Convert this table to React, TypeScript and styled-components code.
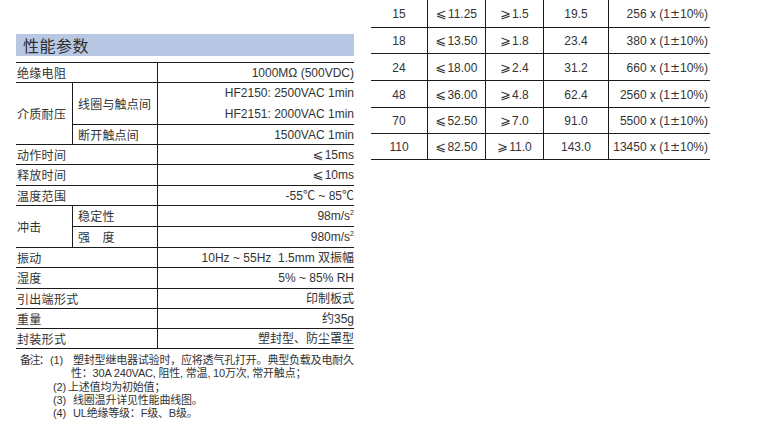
import React from "react";
import styled, { createGlobalStyle, css } from "styled-components";

const GlobalStyle = createGlobalStyle`
  html, body {
    margin: 0;
    padding: 0;
    background: #ffffff;
  }
  body {
    font-family: "Liberation Sans", "Noto Sans CJK SC", sans-serif;
    color: #333333;
  }
`;

const LINE = "#1c1c1c";

const Page = styled.div`
  display: flex;
  align-items: flex-start;
  gap: 17px;
  padding-left: 16px;
  width: 770px;
  height: 434px;
  box-sizing: border-box;
  overflow: hidden;
`;

const LeftPanel = styled.section`
  width: 338px;
  padding-top: 34px;
  display: flex;
  flex-direction: column;
`;

const TitleBar = styled.h2`
  margin: 0 0 6px;
  height: 22px;
  background: #b8c8e4;
  padding-left: 7px;
  font: 400 16px/22px "Noto Sans CJK SC", sans-serif;
  letter-spacing: 0.5px;
  color: #2e2e2e;
`;

const SpecGrid = styled.div`
  display: grid;
  grid-template-columns: 57px 85px 196px;
  grid-template-rows: 20px 42px 20px 20px 21px 20px 21px 21px 20px 21px 20px 20px 20px;
  border-top: 1px solid ${LINE};
`;

type Kind = "label" | "sub" | "value";

const Cell = styled.div<{ $kind: Kind; $span?: number; $rows?: number }>`
  box-sizing: border-box;
  border-bottom: 1px solid ${LINE};
  display: flex;
  flex-direction: column;
  justify-content: center;
  font-size: 12px;
  line-height: 14px;
  white-space: nowrap;
  color: #333333;
  grid-column: span ${(p) => p.$span ?? 1};
  grid-row: span ${(p) => p.$rows ?? 1};
  ${(p) =>
    p.$kind === "label" &&
    css`
      border-right: 1px solid ${LINE};
      align-items: flex-start;
      padding-left: 1px;
      letter-spacing: 0.3px;
      font-family: "Noto Sans CJK SC", sans-serif;
    `}
  ${(p) =>
    p.$kind === "sub" &&
    css`
      border-right: 1px solid ${LINE};
      align-items: flex-start;
      padding-left: 5px;
      letter-spacing: 0.2px;
      font-family: "Noto Sans CJK SC", sans-serif;
    `}
  ${(p) =>
    p.$kind === "value" &&
    css`
      align-items: flex-end;
      padding-right: 0;
    `}
`;

const ValueLine = styled.span`
  line-height: 20.5px;
`;

const Sym = styled.span`
  font-family: "DejaVu Sans", "Noto Sans CJK SC", sans-serif;
  font-size: 13px;
  line-height: 0;
  margin-right: 1px;
`;

const PlusMinus = styled.span`
  font-family: "DejaVu Sans", sans-serif;
  font-size: 12px;
`;

const Cjk = styled.span`
  font-family: "Noto Sans CJK SC", sans-serif;
`;

const Sup = styled.sup`
  font-size: 7px;
  line-height: 0;
  vertical-align: 5px;
`;

const Notes = styled.div`
  margin-top: 5px;
  padding-left: 4px;
  font-size: 11px;
  line-height: 13px;
  letter-spacing: -0.2px;
  color: #333333;
`;

const NoteLine = styled.div<{ $indent: number; $gap?: number }>`
  display: flex;
  padding-left: ${(p) => p.$indent}px;
  margin-top: ${(p) => p.$gap ?? 0}px;
  white-space: nowrap;
`;

const NoteTag = styled.span<{ $w?: number; $tight?: boolean }>`
  flex: none;
  width: ${(p) => (p.$w ? `${p.$w}px` : "auto")};
  letter-spacing: ${(p) => (p.$tight ? "-1.6px" : "inherit")};
  overflow: hidden;
`;

const RightTable = styled.div`
  display: grid;
  grid-template-columns: 57px 58px 58px 65px 101px;
  grid-template-rows: 28px 26px 27px 27px 26px 26px;
  width: 339px;
`;

const TCell = styled.div<{ $last?: boolean }>`
  box-sizing: border-box;
  border-bottom: 1px solid ${LINE};
  border-right: ${(p) => (p.$last ? "none" : `1px solid ${LINE}`)};
  display: flex;
  align-items: center;
  justify-content: ${(p) => (p.$last ? "flex-end" : "center")};
  padding-right: ${(p) => (p.$last ? "2px" : "0")};
  padding-top: 1px;
  font-size: 12px;
  white-space: nowrap;
  color: #333333;
`;

const le = "\u2A7D";
const ge = "\u2A7E";

const coilRows = [
  ["15", "11.25", "1.5", "19.5", "256"],
  ["18", "13.50", "1.8", "23.4", "380"],
  ["24", "18.00", "2.4", "31.2", "660"],
  ["48", "36.00", "4.8", "62.4", "2560"],
  ["70", "52.50", "7.0", "91.0", "5500"],
  ["110", "82.50", "11.0", "143.0", "13450"],
];

export default function App() {
  return (
    <>
      <GlobalStyle />
      <Page>
        <LeftPanel>
          <TitleBar>性能参数</TitleBar>
          <SpecGrid>
            <Cell $kind="label" $span={2}>绝缘电阻</Cell>
            <Cell $kind="value">1000MΩ (500VDC)</Cell>

            <Cell $kind="label" $rows={2}>介质耐压</Cell>
            <Cell $kind="sub">线圈与触点间</Cell>
            <Cell $kind="value">
              <ValueLine>HF2150: 2500VAC 1min</ValueLine>
              <ValueLine>HF2151: 2000VAC 1min</ValueLine>
            </Cell>
            <Cell $kind="sub">断开触点间</Cell>
            <Cell $kind="value">1500VAC 1min</Cell>

            <Cell $kind="label" $span={2}>动作时间</Cell>
            <Cell $kind="value">
              <span><Sym>{le}</Sym>15ms</span>
            </Cell>
            <Cell $kind="label" $span={2}>释放时间</Cell>
            <Cell $kind="value">
              <span><Sym>{le}</Sym>10ms</span>
            </Cell>
            <Cell $kind="label" $span={2}>温度范围</Cell>
            <Cell $kind="value">
              <span>-55<Cjk>℃</Cjk> ~ 85<Cjk>℃</Cjk></span>
            </Cell>

            <Cell $kind="label" $rows={2}>冲击</Cell>
            <Cell $kind="sub">稳定性</Cell>
            <Cell $kind="value">
              <span>98m/s<Sup>2</Sup></span>
            </Cell>
            <Cell $kind="sub">强　度</Cell>
            <Cell $kind="value">
              <span>980m/s<Sup>2</Sup></span>
            </Cell>

            <Cell $kind="label" $span={2}>振动</Cell>
            <Cell $kind="value">
              <span>10Hz ~ 55Hz&nbsp; 1.5mm <Cjk>双振幅</Cjk></span>
            </Cell>
            <Cell $kind="label" $span={2}>湿度</Cell>
            <Cell $kind="value">5% ~ 85% RH</Cell>
            <Cell $kind="label" $span={2}>引出端形式</Cell>
            <Cell $kind="value">印制板式</Cell>
            <Cell $kind="label" $span={2}>重量</Cell>
            <Cell $kind="value">约35g</Cell>
            <Cell $kind="label" $span={2}>封装形式</Cell>
            <Cell $kind="value">塑封型、防尘罩型</Cell>
          </SpecGrid>

          <Notes>
            <NoteLine $indent={0}>
              <NoteTag $w={30} $tight>备注：</NoteTag>
              <NoteTag $w={23}>(1)</NoteTag>
              <span>塑封型继电器试验时，应将透气孔打开。典型负载及电耐久</span>
            </NoteLine>
            <NoteLine $indent={51}>
              <span>性：30A 240VAC, 阻性, 常温, 10万次, 常开触点；</span>
            </NoteLine>
            <NoteLine $indent={33} $gap={1}>
              <NoteTag $w={15}>(2)</NoteTag>
              <span>上述值均为初始值；</span>
            </NoteLine>
            <NoteLine $indent={33}>
              <NoteTag $w={20}>(3)</NoteTag>
              <span>线圈温升详见性能曲线图。</span>
            </NoteLine>
            <NoteLine $indent={33}>
              <NoteTag $w={20}>(4)</NoteTag>
              <span>UL绝缘等级：F级、B级。</span>
            </NoteLine>
          </Notes>
        </LeftPanel>

        <RightTable>
          {coilRows.map(([v, pick, drop, power, res]) => (
            <React.Fragment key={v}>
              <TCell>{v}</TCell>
              <TCell>
                <span><Sym>{le}</Sym>{pick}</span>
              </TCell>
              <TCell>
                <span><Sym>{ge}</Sym>{drop}</span>
              </TCell>
              <TCell>{power}</TCell>
              <TCell $last>
                <span>
                  {res} x (1<PlusMinus>±</PlusMinus>10%)
                </span>
              </TCell>
            </React.Fragment>
          ))}
        </RightTable>
      </Page>
    </>
  );
}
